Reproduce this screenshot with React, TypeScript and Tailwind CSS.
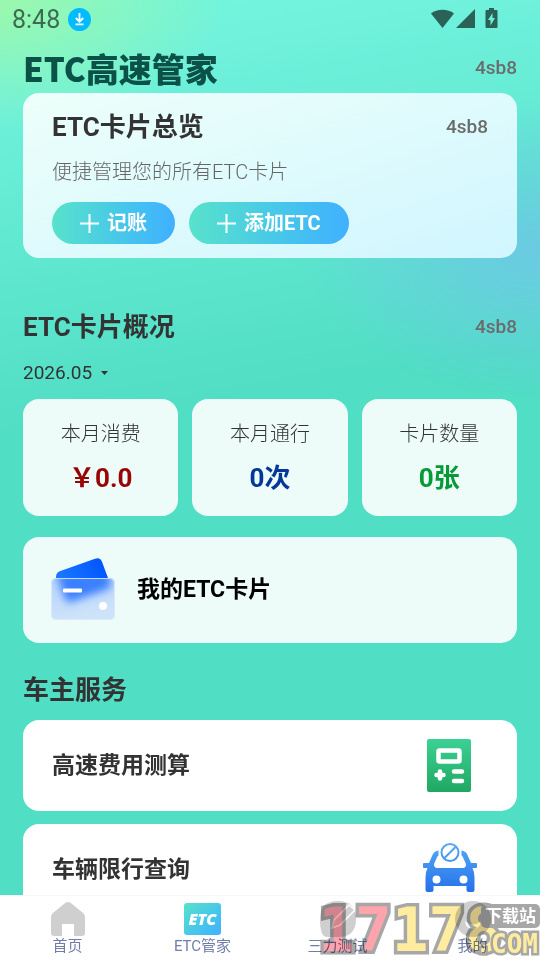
import { useState } from 'react';

type Stat = { label: string; value: string; color: string };

const CODE = '4sb8';

const STATS: Stat[] = [
  { label: '本月消费', value: '￥0.0', color: 'text-[#990505]' },
  { label: '本月通行', value: '0次', color: 'text-[#053799]' },
  { label: '卡片数量', value: '0张', color: 'text-[#079a37]' },
];

const MONTHS = ['2026.05', '2026.04', '2026.03'];

function StatusBar() {
  return (
    <div className="flex h-[38px] items-center justify-between pr-10 pl-3 text-[#2b6257]">
      <div className="flex items-center gap-2">
        <span className="text-[25px] leading-none text-[#3d6b52]">8:48</span>
        <svg width="23" height="23" viewBox="0 0 23 23" aria-hidden="true">
          <circle cx="11.5" cy="11.5" r="11.5" fill="#03bbff" />
          <path
            d="M11.5 5v8M7.8 10l3.7 3.7 3.7-3.7M7.5 16.3h8"
            fill="none"
            stroke="#fff"
            strokeWidth="1.8"
          />
        </svg>
      </div>
      <svg width="69" height="22" viewBox="0 0 69 22" fill="currentColor" aria-hidden="true">
        <path d="M0 5.5C6 .5 17 .5 23 5.5L11.5 20Z" />
        <path d="M25 20 44 1v19Z" />
        <path
          fillRule="evenodd"
          d="M58 0h5v2h2.500q1 0 1 1v16q0 1-1 1h-10q-1 0-1-1V3q0-1 1-1H58ZM61.500 5 57 12h2.500v5.500L64 10h-2.500Z"
        />
      </svg>
    </div>
  );
}

function CodeTag() {
  return <span className="text-[19px] leading-6 font-medium text-[#6b6b6b]">{CODE}</span>;
}

function PlusIcon() {
  return (
    <svg width="19" height="19" viewBox="0 0 19 19" stroke="#fff" strokeWidth="2" aria-hidden="true">
      <path d="M9.500 0v19M0 9.500h19" />
    </svg>
  );
}

function PillButton({ label }: { label: string }) {
  return (
    <button
      type="button"
      className="flex h-[42px] items-center gap-2 rounded-full bg-linear-to-r from-[#58e2ca] to-[#40b0ff] px-7 text-[20px] font-bold text-white"
    >
      <PlusIcon />
      {label}
    </button>
  );
}

function WalletIcon() {
  return (
    <svg width="64" height="64" viewBox="0 0 64 64" aria-hidden="true">
      <defs>
        <linearGradient id="backCard" x1="0" y1="0.5" x2="1" y2="0.2">
          <stop offset="0" stopColor="#1a78ff" />
          <stop offset="1" stopColor="#0052ff" />
        </linearGradient>
        <linearGradient id="frontCard" x1="0" y1="0" x2="0.3" y2="1">
          <stop offset="0" stopColor="#b9d4fd" />
          <stop offset="1" stopColor="#cde3f9" />
        </linearGradient>
        <filter id="soft" x="-30%" y="-30%" width="160%" height="160%">
          <feGaussianBlur stdDeviation="4" />
        </filter>
        <clipPath id="frontClip">
          <rect x="0" y="20" width="64" height="42" rx="5" />
        </clipPath>
      </defs>
      <path d="M8 13.5 44 .8q5-1.800 7 3L57 20v6H6L5 19q0-4 3-5.500Z" fill="url(#backCard)" />
      <rect x="0" y="20" width="64" height="42" rx="5" fill="url(#frontCard)" />
      <g clipPath="url(#frontClip)">
        <path d="M5 14h53l2 14q0 2-3 3L20 44q-4 1-6-3Z" fill="#3a80ff" filter="url(#soft)" />
      </g>
      <rect x="0.500" y="20.500" width="63" height="41" rx="5" fill="none" stroke="#deecff" strokeOpacity="0.8" />
      <rect x="12" y="30.500" width="19" height="4" rx="1" fill="#fff" />
      <circle cx="52" cy="48" r="4" fill="#fff" />
    </svg>
  );
}

function CalculatorIcon() {
  return (
    <svg width="44" height="53" viewBox="0 0 44 53" aria-hidden="true">
      <defs>
        <linearGradient id="calcFill" x1="0" y1="0" x2="0" y2="1">
          <stop offset="0" stopColor="#3bd195" />
          <stop offset="1" stopColor="#20a862" />
        </linearGradient>
      </defs>
      <rect width="44" height="53" rx="2" fill="url(#calcFill)" />
      <rect x="11.500" y="11.500" width="21" height="11" rx="1" fill="none" stroke="#fff" strokeWidth="4.5" />
      <g stroke="#fff" strokeWidth="4.5" strokeLinecap="round">
        <path d="M13 32.500v7M9.500 36h7" />
        <path d="M27 32.500h8M27 42h8" />
      </g>
    </svg>
  );
}

function BannedCarIcon() {
  return (
    <svg width="54" height="54" viewBox="0 0 54 54" aria-hidden="true">
      <defs>
        <linearGradient id="carFill" gradientUnits="userSpaceOnUse" x1="0" y1="0" x2="0" y2="50">
          <stop offset="0" stopColor="#55aaf5" />
          <stop offset="1" stopColor="#2470ea" />
        </linearGradient>
      </defs>
      <g fill="none" stroke="url(#carFill)" strokeWidth="2">
        <circle cx="27" cy="9.5" r="8.500" />
        <path d="M21.500 15 32.500 4" />
      </g>
      <path
        fillRule="evenodd"
        fill="url(#carFill)"
        d="M15.500 7.500v5q-1.500 1-2 3L11 21q0 4 3 4h26q3 0 3-4l-2.500-5.500q-.5-2-2-3v-5q4.500.5 6 4.500l3.500 8h5q1 0 1 1v3q0 1-1 1h-3.500q2 4 2 9v13q0 2-2 2h-4q-2 0-2-2v-4h-33v4q0 2-2 2h-4q-2 0-2-2V34q0-5 2-9H1q-1 0-1-1v-3q0-1 1-1h5l3.500-8q1.500-4 6-4.500ZM13.500 32.500a4 4 0 1 0 0 8 4 4 0 0 0 0-8Zm27 0a4 4 0 1 0 0 8 4 4 0 0 0 0-8Z"
      />
    </svg>
  );
}

function HomeIcon() {
  return (
    <svg width="34" height="34" viewBox="0 0 34 34" aria-hidden="true">
      <path
        fill="#cfcfcf"
        d="M14.500.8q2.500-1.500 5 0L32 11q2 1.500 2 4v16q0 3-3 3h-8V23q0-1-1-1H12q-1 0-1 1v11H3q-3 0-3-3V15q0-2.500 2-4Z"
      />
    </svg>
  );
}

function EtcIcon() {
  return (
    <span className="flex h-8 w-[37px] items-center justify-center rounded-[3px] bg-linear-to-br from-[#58e2ca] to-[#40b0ff] font-['Open_Sans',sans-serif] text-[16px] leading-none font-extrabold text-white italic">
      ETC
    </span>
  );
}

function PencilIcon() {
  return (
    <svg width="36" height="36" viewBox="0 0 36 36" aria-hidden="true">
      <path d="M18 0q18 0 18 18t-18 18H7Q0 36 0 18T18 0Z" fill="#cfcfcf" />
      <path d="m12 27 2-8L29 4l6 5-15 15Z" fill="none" stroke="#fff" strokeWidth="1.5" />
    </svg>
  );
}

function FaceIcon() {
  return (
    <svg width="36" height="36" viewBox="0 0 36 36" aria-hidden="true">
      <circle cx="18" cy="18" r="18" fill="#cfcfcf" />
      <path d="M10 20q8 7 16 0-1 8-8 8t-8-8Z" fill="#fff" />
    </svg>
  );
}

const TABS = [
  { label: '首页', icon: <HomeIcon /> },
  { label: 'ETC管家', icon: <EtcIcon /> },
  { label: '三力测试', icon: <PencilIcon /> },
  { label: '我的', icon: <FaceIcon /> },
];

function SiteMark() {
  return (
    <div
      className="pointer-events-none absolute right-0 bottom-0 flex h-[60px] font-['DejaVu_Sans_Mono','Noto_Sans_CJK_SC',monospace] font-bold opacity-65 mix-blend-multiply"
      aria-hidden="true"
    >
      <div className="mr-[38px] text-[61px] leading-[60px] [-webkit-text-stroke:7px_#777] [paint-order:stroke_fill]">
        <span className="text-[#ff7380]">17</span>
        <span className="text-[#ffe36b]">178</span>
      </div>
      <div className="absolute right-0 bottom-0 flex flex-col items-end">
        <span className="rounded-[5px] bg-[#777] px-1 text-[17px] leading-6 text-white">下载站</span>
        <span className="pr-[2px] text-[26px] leading-8 text-[#ffe36b] [-webkit-text-stroke:5px_#777] [paint-order:stroke_fill]">
          .COM
        </span>
      </div>
    </div>
  );
}

export default function App() {
  const [month, setMonth] = useState(MONTHS[0]);
  const [tab, setTab] = useState('ETC管家');

  return (
    <div className="flex h-screen flex-col bg-[radial-gradient(ellipse_230px_130px_at_0_0,#9bf8ac_0,#9bf8ac00_100%),radial-gradient(ellipse_240px_150px_at_100%_250px,#6bcae2_0,#6bcae2aa_35%,#6bcae200_100%),linear-gradient(170deg,#74f6dd_0,#6ff1dc_90px,#50dec4_430px)] font-[Roboto,'Noto_Sans_CJK_SC',sans-serif] text-[#333]">
      <StatusBar />

      <main className="flex-1 overflow-y-auto px-[23px] [scrollbar-width:none]">
        <header className="flex h-[55px] items-center justify-between pt-1">
          <h1 className="font-['Noto_Sans_CJK_SC',sans-serif] text-[33px] leading-10 font-black text-[#0b5148]">
            ETC高速管家
          </h1>
          <CodeTag />
        </header>

        {/* Overview */}
        <section className="rounded-2xl bg-linear-to-br from-[#edfffa] to-[#d0f6ff] px-[29px] pt-4 pb-[14px]">
          <div className="flex items-center justify-between">
            <h2 className="text-[26px] leading-9 font-bold">ETC卡片总览</h2>
            <CodeTag />
          </div>
          <p className="mt-[13px] text-[20px] leading-7 font-light text-[#666]">便捷管理您的所有ETC卡片</p>
          <div className="mt-4 flex gap-[14px]">
            <PillButton label="记账" />
            <PillButton label="添加ETC" />
          </div>
        </section>

        {/* Monthly figures */}
        <section className="mt-[51px]">
          <div className="flex items-center justify-between">
            <h2 className="text-[26px] leading-9 font-bold">ETC卡片概况</h2>
            <CodeTag />
          </div>
          <label className="mt-4 flex w-fit items-center gap-2 text-[19px] leading-6">
            <select
              value={month}
              onChange={(e) => setMonth(e.target.value)}
              aria-label="月份"
              className="appearance-none bg-transparent"
            >
              {MONTHS.map((m) => (
                <option key={m}>{m}</option>
              ))}
            </select>
            <svg width="7" height="4" viewBox="0 0 7 4" aria-hidden="true">
              <path d="M0 0h7L3.500 4Z" fill="#333" />
            </svg>
          </label>
          <div className="mt-[14px] grid grid-cols-3 gap-[14px]">
            {STATS.map((s) => (
              <div
                key={s.label}
                className="flex h-[117px] flex-col items-center rounded-2xl bg-[#edfcf9] pt-[21px]"
              >
                <span className="text-[20px] leading-7 font-light">{s.label}</span>
                <span className={`mt-3 text-[26px] leading-9 font-bold ${s.color}`}>{s.value}</span>
              </div>
            ))}
          </div>
        </section>

        <a
          href="#cards"
          className="mt-[21px] flex h-[106px] items-center gap-[22px] rounded-2xl bg-[#edfcf9] px-7 text-[23px] font-bold text-black"
        >
          <WalletIcon />
          我的ETC卡片
        </a>

        {/* Services */}
        <section className="mt-[29px]">
          <h2 className="text-[26px] leading-9 font-bold">车主服务</h2>
          <div className="mt-3 flex flex-col gap-[13px] text-[23px] leading-8 font-bold">
            <a
              href="#toll"
              className="flex h-[91px] items-center justify-between rounded-2xl bg-white pr-[46px] pl-[29px]"
            >
              高速费用测算
              <CalculatorIcon />
            </a>
            <a
              href="#limit"
              className="flex h-[91px] items-center justify-between rounded-2xl bg-white pr-10 pl-[29px]"
            >
              车辆限行查询
              <BannedCarIcon />
            </a>
          </div>
        </section>
      </main>

      <nav className="relative grid h-[65px] shrink-0 grid-cols-4 border-t border-[#f7f7f7] bg-white">
        {TABS.map((t) => (
          <button
            key={t.label}
            type="button"
            aria-pressed={tab === t.label}
            onClick={() => setTab(t.label)}
            className="flex flex-col items-center pt-[5px] text-[15px] leading-[18px] text-[#707ea8]"
          >
            <span className="flex h-9 items-center">{t.icon}</span>
            {t.label}
          </button>
        ))}
        <SiteMark />
      </nav>
    </div>
  );
}
